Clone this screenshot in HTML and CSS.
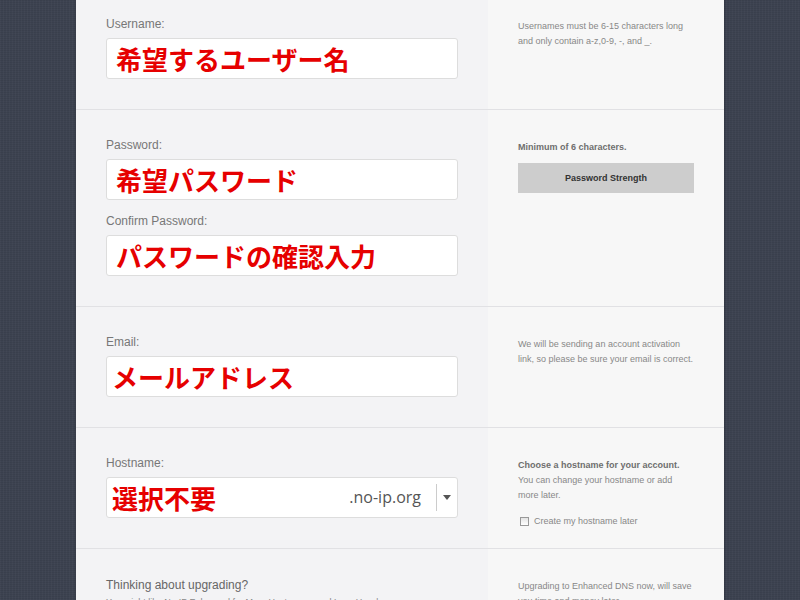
FILE: index.html
```html
<!DOCTYPE html>
<html lang="en">
<head>
  <meta charset="UTF-8">
  <title>Create Account</title>
  <link rel="stylesheet" href="styles.css">
</head>
<body>

  <!-- Sign-up form -->
  <form class="signup" onsubmit="return false;">

    <div class="row">
      <div class="main">
        <label class="field-label" for="username">Username:</label>
        <div class="field" id="username">希望するユーザー名</div>
      </div>
      <div class="aside">
        <p>Usernames must be 6-15 characters long and only contain a-z,0-9, -, and _.</p>
      </div>
    </div>

    <div class="row">
      <div class="main">
        <label class="field-label" for="password">Password:</label>
        <div class="field" id="password">希望パスワード</div>
        <label class="field-label second" for="confirmPassword">Confirm Password:</label>
        <div class="field" id="confirmPassword">パスワードの確認入力</div>
      </div>
      <div class="aside">
        <p class="strong">Minimum of 6 characters.</p>
        <div class="strength">Password Strength</div>
      </div>
    </div>

    <div class="row">
      <div class="main">
        <label class="field-label" for="email">Email:</label>
        <div class="field tight" id="email">メールアドレス</div>
      </div>
      <div class="aside">
        <p>We will be sending an account activation link, so please be sure your email is correct.</p>
      </div>
    </div>

    <div class="row">
      <div class="main">
        <label class="field-label" for="hostname">Hostname:</label>
        <div class="field tight host" id="hostname">
          <span class="host-name">選択不要</span>
          <span class="domain">.no-ip.org</span>
          <span class="caret"></span>
        </div>
      </div>
      <div class="aside">
        <p><b>Choose a hostname for your account.</b><br>You can change your hostname or add more later.</p>
        <label class="later"><input type="checkbox"> Create my hostname later</label>
      </div>
    </div>

    <div class="row">
      <div class="main">
        <p class="upgrade-title">Thinking about upgrading?</p>
        <p class="upgrade-text">You might like No-IP Enhanced for More Hostnames and Less Hassle.</p>
      </div>
      <div class="aside">
        <p>Upgrading to Enhanced DNS now, will save you time and money later.</p>
      </div>
    </div>

  </form>

</body>
</html>
```

FILE: styles.css
```css
body {
  margin: 0;
  font-family: "Liberation Sans", Arial, sans-serif;
  background-color: #3d4351;
  background-image:
    repeating-linear-gradient(90deg, rgba(255, 255, 255, 0.025) 0 1px, transparent 1px 3px),
    repeating-linear-gradient(0deg, rgba(0, 0, 0, 0.06) 0 1px, transparent 1px 2px);
}

.signup {
  width: 648px;
  margin: -11px auto 0;
  box-shadow: 0 0 2px rgba(0, 0, 0, 0.35);
}

.row {
  display: grid;
  grid-template-columns: 412px 236px;
  border-bottom: 1px solid #e1e1e4;
}

.main {
  background: #f3f3f5;
  padding: 27px 30px 30px;
}

.aside {
  background: #f7f7f7;
  padding: 30px 29px 0 30px;
  font-size: 9px;
  line-height: 15px;
  color: #888;
}

.aside p {
  margin: 0;
}

.aside b,
.aside .strong {
  font-weight: bold;
  color: #6e6e6e;
}

.field-label {
  display: block;
  font-size: 12px;
  line-height: 16px;
  color: #777;
  margin-bottom: 6px;
}

.field-label.second {
  margin-top: 13px;
}

.field {
  box-sizing: border-box;
  height: 41px;
  background: #fff;
  border: 1px solid #ddd;
  border-radius: 3px;
  padding: 0 9px;
  font-family: "Noto Sans CJK JP", sans-serif;
  font-weight: bold;
  font-size: 26px;
  line-height: 40px;
  color: #e60000;
  white-space: nowrap;
}

.field.tight {
  padding-left: 5px;
}

.host {
  display: flex;
  align-items: center;
  padding-right: 0;
}

.host-name {
  flex: 1;
}

.domain {
  font-family: "Open Sans", sans-serif;
  font-weight: normal;
  font-size: 16px;
  color: #555;
  padding-right: 15px;
  border-right: 1px solid #ccc;
  line-height: 27px;
}

.caret {
  width: 0;
  height: 0;
  margin: 0 6px 0 6px;
  border-left: 4px solid transparent;
  border-right: 4px solid transparent;
  border-top: 5px solid #555;
}

.strength {
  margin-top: 8px;
  width: 176px;
  height: 30px;
  line-height: 30px;
  background: #cdcdcd;
  text-align: center;
  font-weight: bold;
  color: #333;
}

.later {
  display: flex;
  align-items: center;
  gap: 5px;
  margin-top: 11px;
  color: #888;
}

.later input {
  appearance: none;
  width: 9px;
  height: 9px;
  margin: 0 0 0 2px;
  border: 1px solid #999;
  background: linear-gradient(#e4e4e4, #fff);
}

.upgrade-title {
  margin: 1px 0 2px;
  font-size: 12px;
  line-height: 16px;
  color: #666;
}

.upgrade-text {
  margin: 0;
  font-size: 9px;
  line-height: 15px;
  color: #888;
}
```
